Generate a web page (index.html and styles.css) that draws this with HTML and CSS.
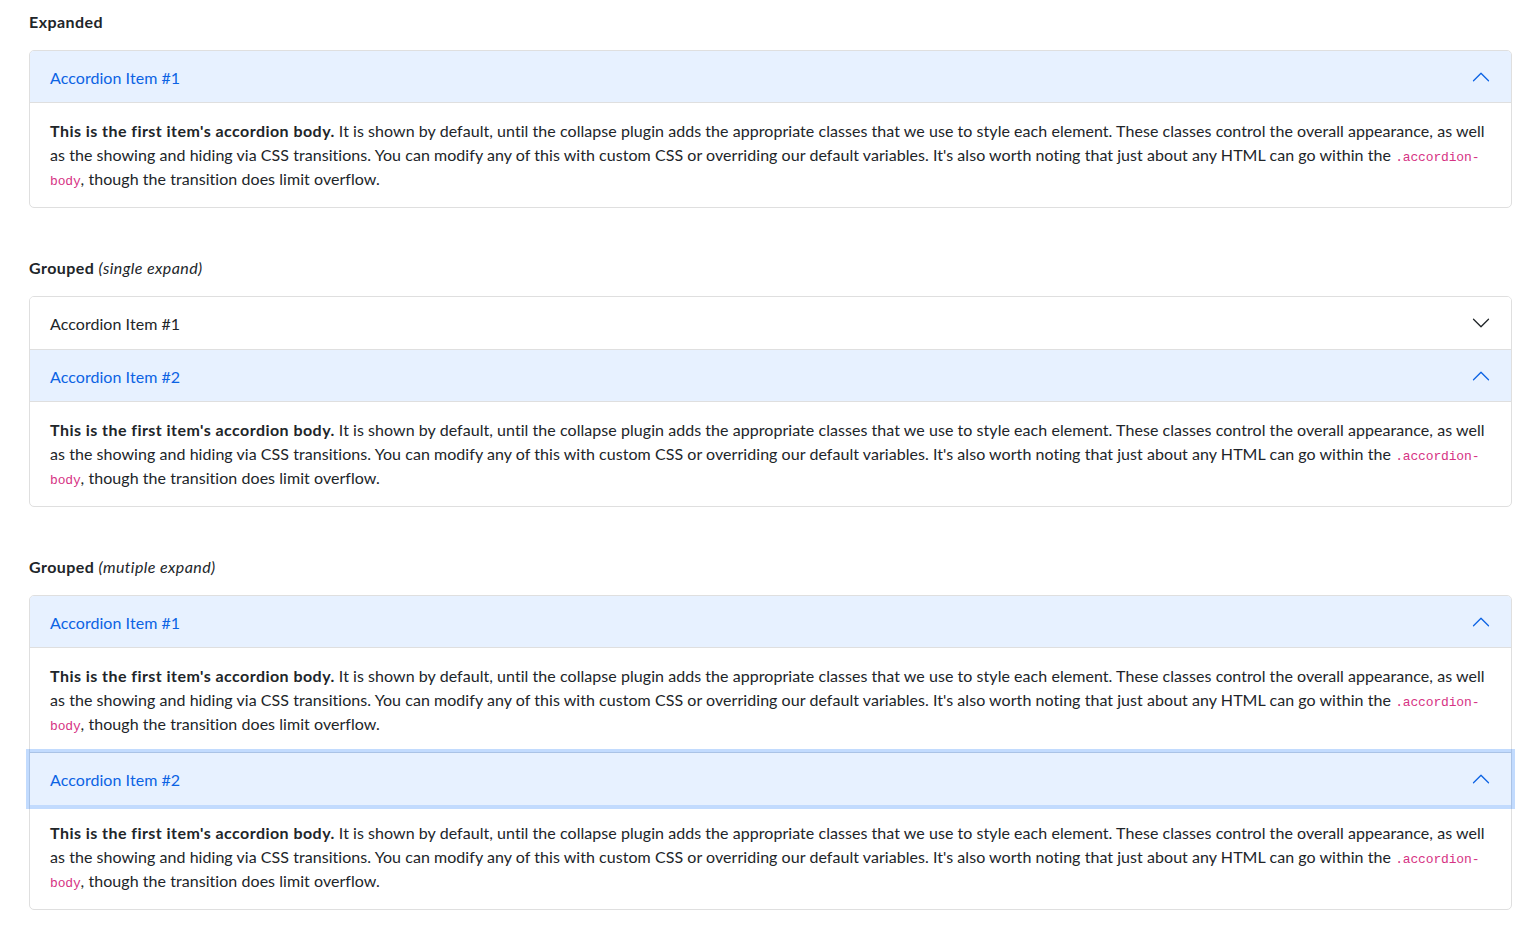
FILE: index.html
```html
<!DOCTYPE html>
<html lang="en">
<head>
<meta charset="utf-8">
<title>Accordion</title>
<link rel="stylesheet" href="styles.css">
</head>
<body>
<main class="page">
  <section class="demo">
    <p class="demo-title"><strong>Expanded</strong></p>
    <div class="accordion">
      <div class="acc-item">
        <h2 class="acc-header">
          <button class="acc-button is-open" type="button"><span class="acc-label">Accordion Item #1</span>
            <svg class="chev" viewBox="0 0 16 16" width="20" height="20"><path fill="currentColor" fill-rule="evenodd" d="M1.646 4.646a.5.5 0 0 1 .708 0L8 10.293l5.646-5.647a.5.5 0 0 1 .708.708l-6 6a.5.5 0 0 1-.708 0l-6-6a.5.5 0 0 1 0-.708z"/></svg>
          </button>
        </h2>
        <div class="acc-body"><strong>This is the first item's accordion body.</strong> It is shown by default, until the collapse plugin adds the appropriate classes that we use to style each element. These classes control the overall appearance, as well as the showing and hiding via CSS transitions. You can modify any of this with custom CSS or overriding our default variables. It's also worth noting that just about any HTML can go within the <code>.accordion-body</code>, though the transition does limit overflow.</div>
      </div>
    </div>
  </section>

  <section class="demo">
    <p class="demo-title"><strong>Grouped</strong> <em>(single expand)</em></p>
    <div class="accordion">
      <div class="acc-item">
        <h2 class="acc-header">
          <button class="acc-button" type="button"><span class="acc-label">Accordion Item #1</span>
            <svg class="chev" viewBox="0 0 16 16" width="20" height="20"><path fill="currentColor" fill-rule="evenodd" d="M1.646 4.646a.5.5 0 0 1 .708 0L8 10.293l5.646-5.647a.5.5 0 0 1 .708.708l-6 6a.5.5 0 0 1-.708 0l-6-6a.5.5 0 0 1 0-.708z"/></svg>
          </button>
        </h2>
      </div>
      <div class="acc-item">
        <h2 class="acc-header">
          <button class="acc-button is-open" type="button"><span class="acc-label">Accordion Item #2</span>
            <svg class="chev" viewBox="0 0 16 16" width="20" height="20"><path fill="currentColor" fill-rule="evenodd" d="M1.646 4.646a.5.5 0 0 1 .708 0L8 10.293l5.646-5.647a.5.5 0 0 1 .708.708l-6 6a.5.5 0 0 1-.708 0l-6-6a.5.5 0 0 1 0-.708z"/></svg>
          </button>
        </h2>
        <div class="acc-body"><strong>This is the first item's accordion body.</strong> It is shown by default, until the collapse plugin adds the appropriate classes that we use to style each element. These classes control the overall appearance, as well as the showing and hiding via CSS transitions. You can modify any of this with custom CSS or overriding our default variables. It's also worth noting that just about any HTML can go within the <code>.accordion-body</code>, though the transition does limit overflow.</div>
      </div>
    </div>
  </section>

  <section class="demo">
    <p class="demo-title"><strong>Grouped</strong> <em>(mutiple expand)</em></p>
    <div class="accordion">
      <div class="acc-item">
        <h2 class="acc-header">
          <button class="acc-button is-open" type="button"><span class="acc-label">Accordion Item #1</span>
            <svg class="chev" viewBox="0 0 16 16" width="20" height="20"><path fill="currentColor" fill-rule="evenodd" d="M1.646 4.646a.5.5 0 0 1 .708 0L8 10.293l5.646-5.647a.5.5 0 0 1 .708.708l-6 6a.5.5 0 0 1-.708 0l-6-6a.5.5 0 0 1 0-.708z"/></svg>
          </button>
        </h2>
        <div class="acc-body"><strong>This is the first item's accordion body.</strong> It is shown by default, until the collapse plugin adds the appropriate classes that we use to style each element. These classes control the overall appearance, as well as the showing and hiding via CSS transitions. You can modify any of this with custom CSS or overriding our default variables. It's also worth noting that just about any HTML can go within the <code>.accordion-body</code>, though the transition does limit overflow.</div>
      </div>
      <div class="acc-item">
        <h2 class="acc-header">
          <button class="acc-button is-open is-focused" type="button"><span class="acc-label">Accordion Item #2</span>
            <svg class="chev" viewBox="0 0 16 16" width="20" height="20"><path fill="currentColor" fill-rule="evenodd" d="M1.646 4.646a.5.5 0 0 1 .708 0L8 10.293l5.646-5.647a.5.5 0 0 1 .708.708l-6 6a.5.5 0 0 1-.708 0l-6-6a.5.5 0 0 1 0-.708z"/></svg>
          </button>
        </h2>
        <div class="acc-body"><strong>This is the first item's accordion body.</strong> It is shown by default, until the collapse plugin adds the appropriate classes that we use to style each element. These classes control the overall appearance, as well as the showing and hiding via CSS transitions. You can modify any of this with custom CSS or overriding our default variables. It's also worth noting that just about any HTML can go within the <code>.accordion-body</code>, though the transition does limit overflow.</div>
      </div>
    </div>
  </section>
</main>
</body>
</html>
```

FILE: styles.css
```css
* { box-sizing: border-box; }

html, body {
  margin: 0;
  background: #fff;
}

body {
  font-family: "Segoe UI", Lato, "Noto Sans", sans-serif;
  font-size: 16px;
  line-height: 1.5;
  letter-spacing: 0.05px;
  color: #212529;
}

.page {
  padding: 10px 26px 30px 29px;
}

.demo {
  margin-bottom: 48px;
}

.demo-title {
  margin: 0 0 16px;
}

.demo-title strong { font-weight: 700; letter-spacing: 0.45px; }
.demo-title em { font-style: italic; font-weight: 400; letter-spacing: 0.4px; }

.accordion {
  border: 1px solid #dfdfdf;
  border-radius: 5px;
  background: #fff;
}

.acc-item + .acc-item {
  border-top: 1px solid #dfdfdf;
}

.acc-header {
  margin: 0;
  font-size: 16px;
  font-weight: 400;
}

.acc-button {
  position: relative;
  display: flex;
  align-items: center;
  width: 100%;
  height: 52px;
  padding: 0 20px;
  border: 0;
  background: #fff;
  color: #212529;
  font: inherit;
  letter-spacing: 0.05px;
  text-align: left;
  cursor: pointer;
}

.acc-label {
  margin-top: 2px;
}

.acc-item:first-child .acc-button {
  border-top-left-radius: 4px;
  border-top-right-radius: 4px;
}

.acc-button.is-open {
  background: #e7f1ff;
  color: #0c63e4;
  box-shadow: inset 0 -1px 0 #dfdfdf;
}

.acc-button.is-focused {
  z-index: 3;
  box-shadow: 0 0 0 4px rgba(13, 110, 253, 0.25);
}

.chev {
  flex-shrink: 0;
  margin-left: auto;
  color: #212529;
}

.is-open .chev {
  color: #0c63e4;
  transform: rotate(-180deg);
}

.acc-body {
  padding: 16px 20px;
}

.acc-body strong { font-weight: 700; letter-spacing: 0.45px; }

code {
  font-family: "Liberation Mono", "DejaVu Sans Mono", monospace;
  font-size: 13px;
  line-height: 1;
  letter-spacing: -0.15px;
  color: #d63384;
  word-wrap: break-word;
}
```
